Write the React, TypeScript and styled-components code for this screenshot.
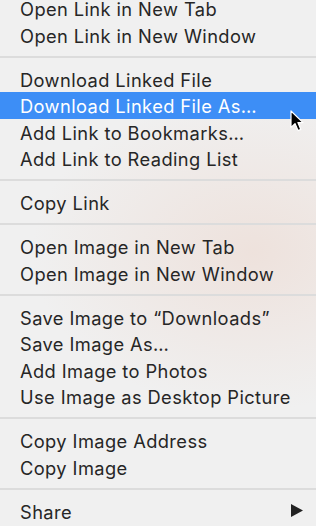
import React from 'react';
import styled, { createGlobalStyle } from 'styled-components';

const sections: string[][] = [
  ['Open Link in New Tab', 'Open Link in New Window'],
  [
    'Download Linked File',
    'Download Linked File As…',
    'Add Link to Bookmarks…',
    'Add Link to Reading List',
  ],
  ['Copy Link'],
  ['Open Image in New Tab', 'Open Image in New Window'],
  [
    'Save Image to “Downloads”',
    'Save Image As…',
    'Add Image to Photos',
    'Use Image as Desktop Picture',
  ],
  ['Copy Image Address', 'Copy Image'],
  ['Share'],
];

const ACTIVE = 'Download Linked File As…';

function App() {
  return (
    <>
      <GlobalStyle />
      <Menu>
        {sections.map((group, i) => (
          <React.Fragment key={i}>
            {i > 0 && <Separator />}
            {group.map((label) => (
              <Item key={label} $active={label === ACTIVE}>
                <Label>{label}</Label>
                {label === 'Share' && (
                  <Arrow viewBox="0 0 12 13">
                    <polygon points="0,0 12,6.5 0,13" />
                  </Arrow>
                )}
                {label === ACTIVE && (
                  <Cursor viewBox="0 0 14 22">
                    <path
                      d="M1 1 L1 17.5 L5 13.6 L8 20.6 L10.8 19.4 L7.9 12.6 L13 12.6 Z"
                      fill="#000"
                      stroke="#fff"
                      strokeWidth="1.2"
                      strokeLinejoin="round"
                    />
                  </Cursor>
                )}
              </Item>
            ))}
          </React.Fragment>
        ))}
      </Menu>
    </>
  );
}

const GlobalStyle = createGlobalStyle`
  html, body {
    margin: 0;
    padding: 0;
    background: #f0f0f0;
    overflow: hidden;
  }
`;

const Menu = styled.div`
  width: 316px;
  height: 526px;
  overflow: hidden;
  display: flex;
  flex-direction: column;
  box-sizing: border-box;
  font-family: Inter, 'Liberation Sans', sans-serif;
  font-size: 18.3px;
  letter-spacing: 0.4px;
  color: #262626;
  background:
    radial-gradient(
      ellipse 70% 30% at 80% 48%,
      rgba(236, 214, 204, 0.55),
      rgba(240, 240, 240, 0) 100%
    ),
    #f0f0f0;
  & > :first-child {
    margin-top: -5px;
  }
`;

const Item = styled.div<{ $active?: boolean }>`
  position: relative;
  flex: none;
  display: flex;
  align-items: center;
  justify-content: space-between;
  height: 26.5px;
  padding: 0 13px 0 20px;
  white-space: nowrap;
  background: ${(p) => (p.$active ? '#3d8ef6' : 'transparent')};
  color: ${(p) => (p.$active ? '#fff' : 'inherit')};
`;

const Label = styled.span`
  line-height: 16px;
  padding-top: 1.5px;
`;

const Separator = styled.div`
  flex: none;
  height: 17.5px;
  display: flex;
  align-items: center;
  &::after {
    content: '';
    display: block;
    width: 100%;
    height: 2px;
    background: #dcdcdc;
  }
`;

const Arrow = styled.svg`
  width: 12px;
  height: 13px;
  fill: #222;
`;

const Cursor = styled.svg`
  position: absolute;
  left: 290px;
  top: 18px;
  width: 14px;
  height: 22px;
`;

export default App;
